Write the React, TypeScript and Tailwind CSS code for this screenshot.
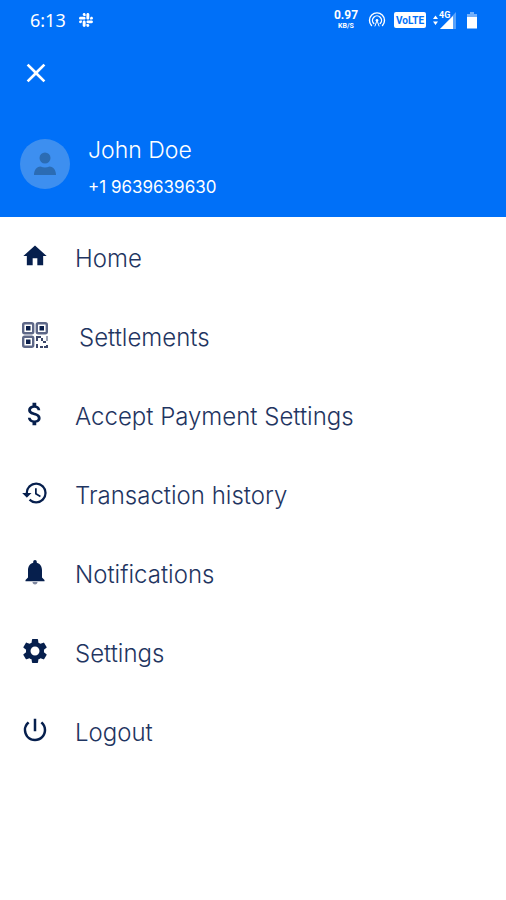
import type { ReactNode } from 'react';
import { FaSlack } from 'react-icons/fa';
import {
  MdAttachMoney,
  MdClose,
  MdHistory,
  MdHome,
  MdPowerSettingsNew,
  MdSettings,
} from 'react-icons/md';

type MenuItem = { label: string; icon: ReactNode; wide?: boolean };

function QrIcon() {
  return (
    <svg viewBox="0 0 26 26" className="size-[26px]" fill="none" aria-hidden="true">
      <g stroke="#5d6787" strokeWidth="2.4">
        <rect x="1.2" y="1.2" width="10" height="10" rx="1.5" />
        <rect x="14.8" y="1.2" width="10" height="10" rx="1.5" />
        <rect x="1.2" y="14.8" width="10" height="10" rx="1.5" />
      </g>
      <g fill="#0b1f4b">
        <rect x="4" y="4" width="4.500" height="4.500" />
        <rect x="17.500" y="4" width="4.500" height="4.500" />
        <rect x="4" y="17.500" width="4.500" height="4.500" />
      </g>
      <g fill="#3b4669">
        <path d="M14 14h5v2h-3v3h-2zM19 16h2v3h3v2h-3v-2h-2zM14 22h2v4h-2zM18 24h3v2h-3zM24 23h2v3h-4v-2h2z" />
        <path d="M24 14h2v5h-2z" opacity=".5" />
      </g>
    </svg>
  );
}

function BellIcon() {
  return (
    <svg viewBox="0 0 28 28" className="size-7" aria-hidden="true">
      <path
        fill="currentColor"
        d="M14 2c-1.100 0-1.800.8-1.800 1.900v.9C8.800 5.700 7 8.700 7 12.500v7L4.500 22v1.200h19V22L21 19.500v-7c0-3.800-1.800-6.800-5.200-7.700v-.9C15.800 2.800 15.100 2 14 2z"
      />
      <path fill="#8088a0" d="M11.500 24h5c0 1.500-1 2.500-2.500 2.500s-2.500-1-2.500-2.500z" />
    </svg>
  );
}

const items: MenuItem[] = [
  { label: 'Home', icon: <MdHome className="size-7" /> },
  { label: 'Settlements', icon: <QrIcon />, wide: true },
  { label: 'Accept Payment Settings', icon: <MdAttachMoney className="size-[30px]" /> },
  { label: 'Transaction history', icon: <MdHistory className="size-7" /> },
  { label: 'Notifications', icon: <BellIcon /> },
  { label: 'Settings', icon: <MdSettings className="size-[30px]" /> },
  { label: 'Logout', icon: <MdPowerSettingsNew className="size-[30px]" /> },
];

function StatusBar() {
  return (
    <div className="flex h-10 items-center justify-between pl-[30px] pr-7">
      <div className="flex items-center gap-3">
        <span className="font-['Noto_Sans'] text-lg">6:13</span>
        <FaSlack className="size-4" />
      </div>
      <div className="flex items-center">
        <div className="flex w-6 flex-col items-center font-bold">
          <span className="font-[Roboto] text-[12px] leading-[13px]">0.97</span>
          <span className="font-[Roboto] text-[7px] leading-[9px]">KB/S</span>
        </div>
        <svg
          viewBox="0 0 18 18"
          className="ml-2.5 size-[18px]"
          fill="none"
          stroke="currentColor"
          strokeWidth="1.4"
          strokeLinecap="round"
          aria-hidden="true"
        >
          <path d="M3.500 14.500a7.500 7.500 0 1 1 11 0M5.800 12.500a4.500 4.500 0 1 1 6.400 0" />
          <circle cx="9" cy="9.300" r="1.300" fill="currentColor" stroke="none" />
          <path d="M9 9.500l-2 5.500M9 9.500l2 5.500" strokeWidth="1" />
        </svg>
        <span className="ml-2 flex h-4 w-8 items-center justify-center rounded-xs bg-white font-[Roboto] text-[10px] font-bold text-[#0070f8]">
          VoLTE
        </span>
        <svg viewBox="0 0 26 18" className="ml-1.5 h-[18px] w-[26px]" fill="currentColor" aria-hidden="true">
          <path d="M1 8l2.500-3.500L6 8zM1 10.500h5L3.500 14z" />
          <path d="M24 1v17H8z" opacity=".35" />
          <path d="M21 5v13H8z" />
          <text x="7" y="7" fontSize="9" fontWeight="700" fontFamily="Roboto, sans-serif">4G</text>
        </svg>
        <svg viewBox="0 0 12 18" className="ml-2 h-[18px] w-3" fill="currentColor" aria-hidden="true">
          <path d="M4 1h4v2h3v14H1V3h3z" opacity=".45" />
          <path d="M1 6h10v11.500H1z" />
        </svg>
      </div>
    </div>
  );
}

export default function App() {
  return (
    <div className="min-h-screen bg-white font-[Inter,sans-serif] text-[#1f3561]">
      <header className="bg-[#0070f8] pb-3 text-white">
        <StatusBar />
        <button type="button" aria-label="Close menu" className="ml-5 mt-[17px] block">
          <MdClose className="size-8" />
        </button>
        <div className="mt-[42px] flex items-start gap-[18px] pl-5">
          <svg viewBox="0 0 50 50" className="mt-2 size-[50px]" aria-hidden="true">
            <circle cx="25" cy="25" r="25" fill="#3d8ff0" />
            <g fill="#2b6cb4">
              <circle cx="25" cy="19" r="5.500" />
              <path d="M14 36c0-4.500 2.500-8.500 6.500-8.500q4.500 2 9 0c4 0 6.500 4 6.500 8.500z" />
            </g>
          </svg>
          <div>
            <h1 className="text-[23px] font-light leading-[38px]">John Doe</h1>
            <p className="text-[17px] leading-[36px]">+1 9639639630</p>
          </div>
        </div>
      </header>

      <nav>
        <ul>
          {items.map(item => (
            <li key={item.label}>
              <a href="#" className="flex h-[79px] items-center pl-[19px]">
                <span className="flex w-8 justify-center pb-0.5 text-[#061f4d]">{item.icon}</span>
                <span className={'pt-1 text-2xl font-light ' + (item.wide ? 'pl-7' : 'pl-6')}>
                  {item.label}
                </span>
              </a>
            </li>
          ))}
        </ul>
      </nav>
    </div>
  );
}
